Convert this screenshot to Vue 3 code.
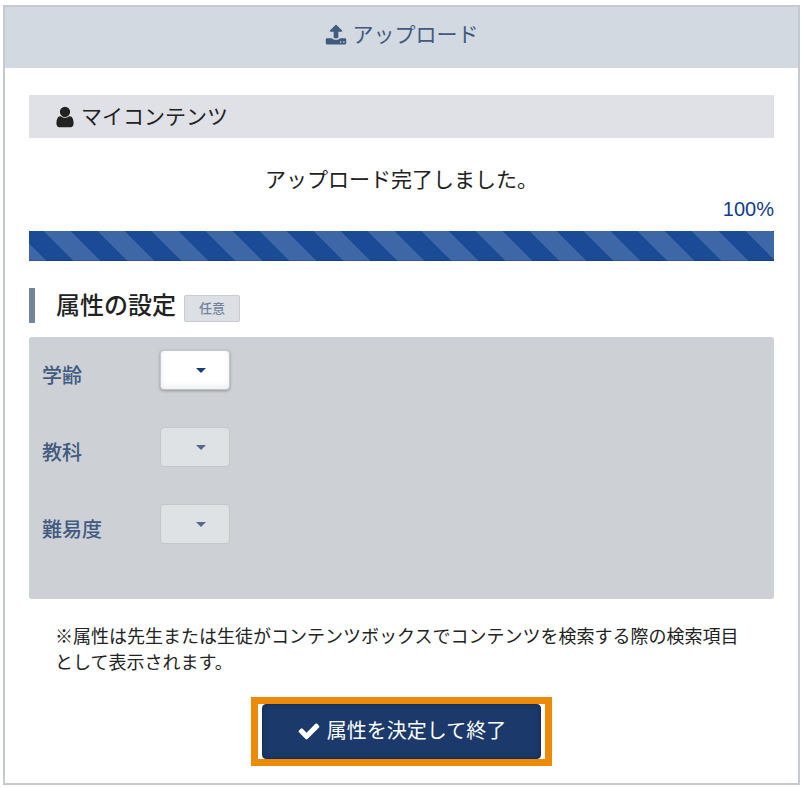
<template>
  <main class="panel">
    <header class="panel-header">
      <svg class="icon" viewBox="0 0 1792 1792" aria-hidden="true">
        <path d="M1344 1472q0-26-19-45t-45-19-45 19-19 45 19 45 45 19 45-19 19-45zm256 0q0-26-19-45t-45-19-45 19-19 45 19 45 45 19 45-19 19-45zm128-224v320q0 40-28 68t-68 28h-1472q-40 0-68-28t-28-68v-320q0-40 28-68t68-28h427q21 56 70.5 92t110.5 36h256q61 0 110.5-36t70.5-92h427q40 0 68 28t28 68zm-325-648q-17 40-59 40h-256v448q0 26-19 45t-45 19h-256q-26 0-45-19t-19-45v-448h-256q-42 0-59-40-17-39 14-69l448-448q18-19 45-19t45 19l448 448q31 30 14 69z" />
      </svg>
      <h1>アップロード</h1>
    </header>

    <div class="panel-body">
      <div class="folder">
        <svg class="icon" viewBox="0 0 1792 1792" aria-hidden="true">
          <path d="M1536 1399q0 109-62.5 187t-150.5 78h-854q-88 0-150.5-78t-62.5-187q0-85 8.5-160.5t31.5-152 58.5-131 94-89 134.5-34.5q131 128 313 128t313-128q76 0 134.5 34.5t94 89 58.5 131 31.5 152 8.5 160.5zm-256-887q0 159-112.5 271.5t-271.5 112.5-271.5-112.5-112.5-271.5 112.5-271.5 271.5-112.5 271.5 112.5 112.5 271.5z" />
        </svg>
        <span>マイコンテンツ</span>
      </div>

      <p class="message">アップロード完了しました。</p>
      <div class="percent">{{ progress }}%</div>
      <div class="progress">
        <div class="progress-bar" :style="{ width: progress + '%' }"></div>
      </div>

      <div class="section-title">
        <h2>属性の設定</h2>
        <span class="badge">任意</span>
      </div>

      <div class="attributes">
        <div v-for="field in fields" :key="field.id" class="row">
          <label :for="field.id">{{ field.label }}</label>
          <div class="select-box" :class="{ disabled: isDisabled(field) }">
            <select :id="field.id" v-model="field.value" :disabled="isDisabled(field)">
              <option value=""></option>
            </select>
          </div>
        </div>
      </div>

      <p class="note">※属性は先生または生徒がコンテンツボックスでコンテンツを検索する際の検索項目として表示されます。</p>

      <div class="highlight">
        <button type="button" class="submit">
          <svg class="icon" viewBox="0 0 1792 1792" aria-hidden="true">
            <path d="M1671 566q0 40-28 68l-724 724-136 136q-28 28-68 28t-68-28l-136-136-362-362q-28-28-28-68t28-68l136-136q28-28 68-28t68 28l294 295 656-657q28-28 68-28t68 28l136 136q28 28 28 68z" />
          </svg>
          <span>属性を決定して終了</span>
        </button>
      </div>
    </div>
  </main>
</template>

<script setup>
import { ref } from 'vue'

const progress = ref(100)

const fields = ref([
  { id: 'age', label: '学齢', value: '' },
  { id: 'subject', label: '教科', value: '' },
  { id: 'level', label: '難易度', value: '' }
])

// 学齢が選ばれるまで、ほかの項目は選べない
function isDisabled(field) {
  return field.id !== 'age' && !fields.value[0].value
}
</script>

<style>
body {
  padding: 5px 2px 3px 3px;
  background: #fff;
}
</style>

<style scoped>
.panel {
  border: 2px solid #c6c9cf;
  background: #fff;
  color: #222;
  font-family: "Liberation Sans", "Noto Sans CJK JP", sans-serif;
  font-size: 21px;
}

h1,
h2,
p {
  margin: 0;
  font-weight: 400;
}

.icon {
  width: 22px;
  height: 22px;
  fill: currentColor;
  flex: none;
}

.panel-header {
  display: flex;
  align-items: center;
  justify-content: center;
  gap: 6px;
  padding: 12px 0 17px;
  background: #d2d9e0;
  color: #405a80;
}

.panel-header h1 {
  font-size: 21px;
  line-height: 32px;
}

.panel-body {
  padding: 27px 24px 17px;
}

.folder {
  display: flex;
  align-items: center;
  gap: 4px;
  padding: 6px 24px 5px;
  background: #e0e1e6;
  line-height: 32px;
}

.folder .icon {
  width: 24px;
  height: 24px;
}

.message {
  margin-top: 26px;
  line-height: 32px;
  text-align: center;
}

.percent {
  color: #103c8f;
  font-size: 20px;
  line-height: 26px;
  text-align: right;
}

.progress {
  margin-top: 9px;
  background: #e0e1e6;
}

.progress-bar {
  height: 30px;
  background-color: #1b4a96;
  background-image: linear-gradient(
    45deg,
    #3e67a7 25%,
    transparent 25%,
    transparent 50%,
    #3e67a7 50%,
    #3e67a7 75%,
    transparent 75%
  );
  background-position: -9px 100%;
  background-size: 54px 54px;
  box-shadow: inset 0 -1px 0 rgba(0, 0, 0, 0.15);
}

.section-title {
  display: flex;
  align-items: center;
  gap: 8px;
  margin: 27px 0 14px;
  padding-left: 21px;
  border-left: 6px solid #71849c;
}

.section-title h2 {
  font-size: 24px;
  font-weight: 500;
  line-height: 35px;
}

.badge {
  margin-top: 6px;
  padding: 0 14px;
  border: 1px solid #c6ccd2;
  border-radius: 2px;
  background: #dce0e4;
  color: #71849c;
  font-size: 13px;
  font-weight: 500;
  line-height: 25px;
}

.attributes {
  display: flex;
  flex-direction: column;
  gap: 25px;
  padding: 13px 13px 43px;
  border-radius: 3px;
  background: #cdd0d5;
}

.row {
  display: flex;
  align-items: flex-start;
}

.row label {
  width: 118px;
  color: #405a80;
  font-size: 20px;
  font-weight: 500;
  line-height: 52px;
}

.select-box {
  position: relative;
}

.select-box::after {
  content: "";
  position: absolute;
  top: 18px;
  right: 24px;
  border: 5px solid transparent;
  border-top-color: #1b3d76;
  border-bottom: 0;
  pointer-events: none;
}

.select-box select {
  display: block;
  width: 70px;
  height: 40px;
  padding: 0 30px 0 12px;
  border: 1px solid #c3c6ca;
  border-radius: 4px;
  background: #fff;
  box-shadow: inset 0 -3px 6px #eceff1, 0 1px 3px rgba(0, 0, 0, 0.3);
  appearance: none;
}

.select-box.disabled::after {
  border-top-color: #53698f;
}

.select-box.disabled select {
  background: #dfe2e5;
  box-shadow: none;
  opacity: 1;
}

.note {
  margin-top: 25px;
  padding: 0 26px;
  font-size: 18px;
  line-height: 26px;
}

.highlight {
  width: fit-content;
  margin: 21px auto 0;
  padding: 0 4px;
  border: 7px solid #ec8b0a;
}

.submit {
  display: flex;
  align-items: center;
  gap: 6px;
  padding: 12px 34px 13px;
  border: 1px solid #162f59;
  border-radius: 4px;
  background: #1b3a6b;
  box-shadow: inset 0 0 6px #162f59;
  color: #fff;
  font-family: inherit;
  font-size: 20px;
  line-height: 28px;
  cursor: pointer;
}

.submit .icon {
  width: 24px;
  height: 24px;
}
</style>
